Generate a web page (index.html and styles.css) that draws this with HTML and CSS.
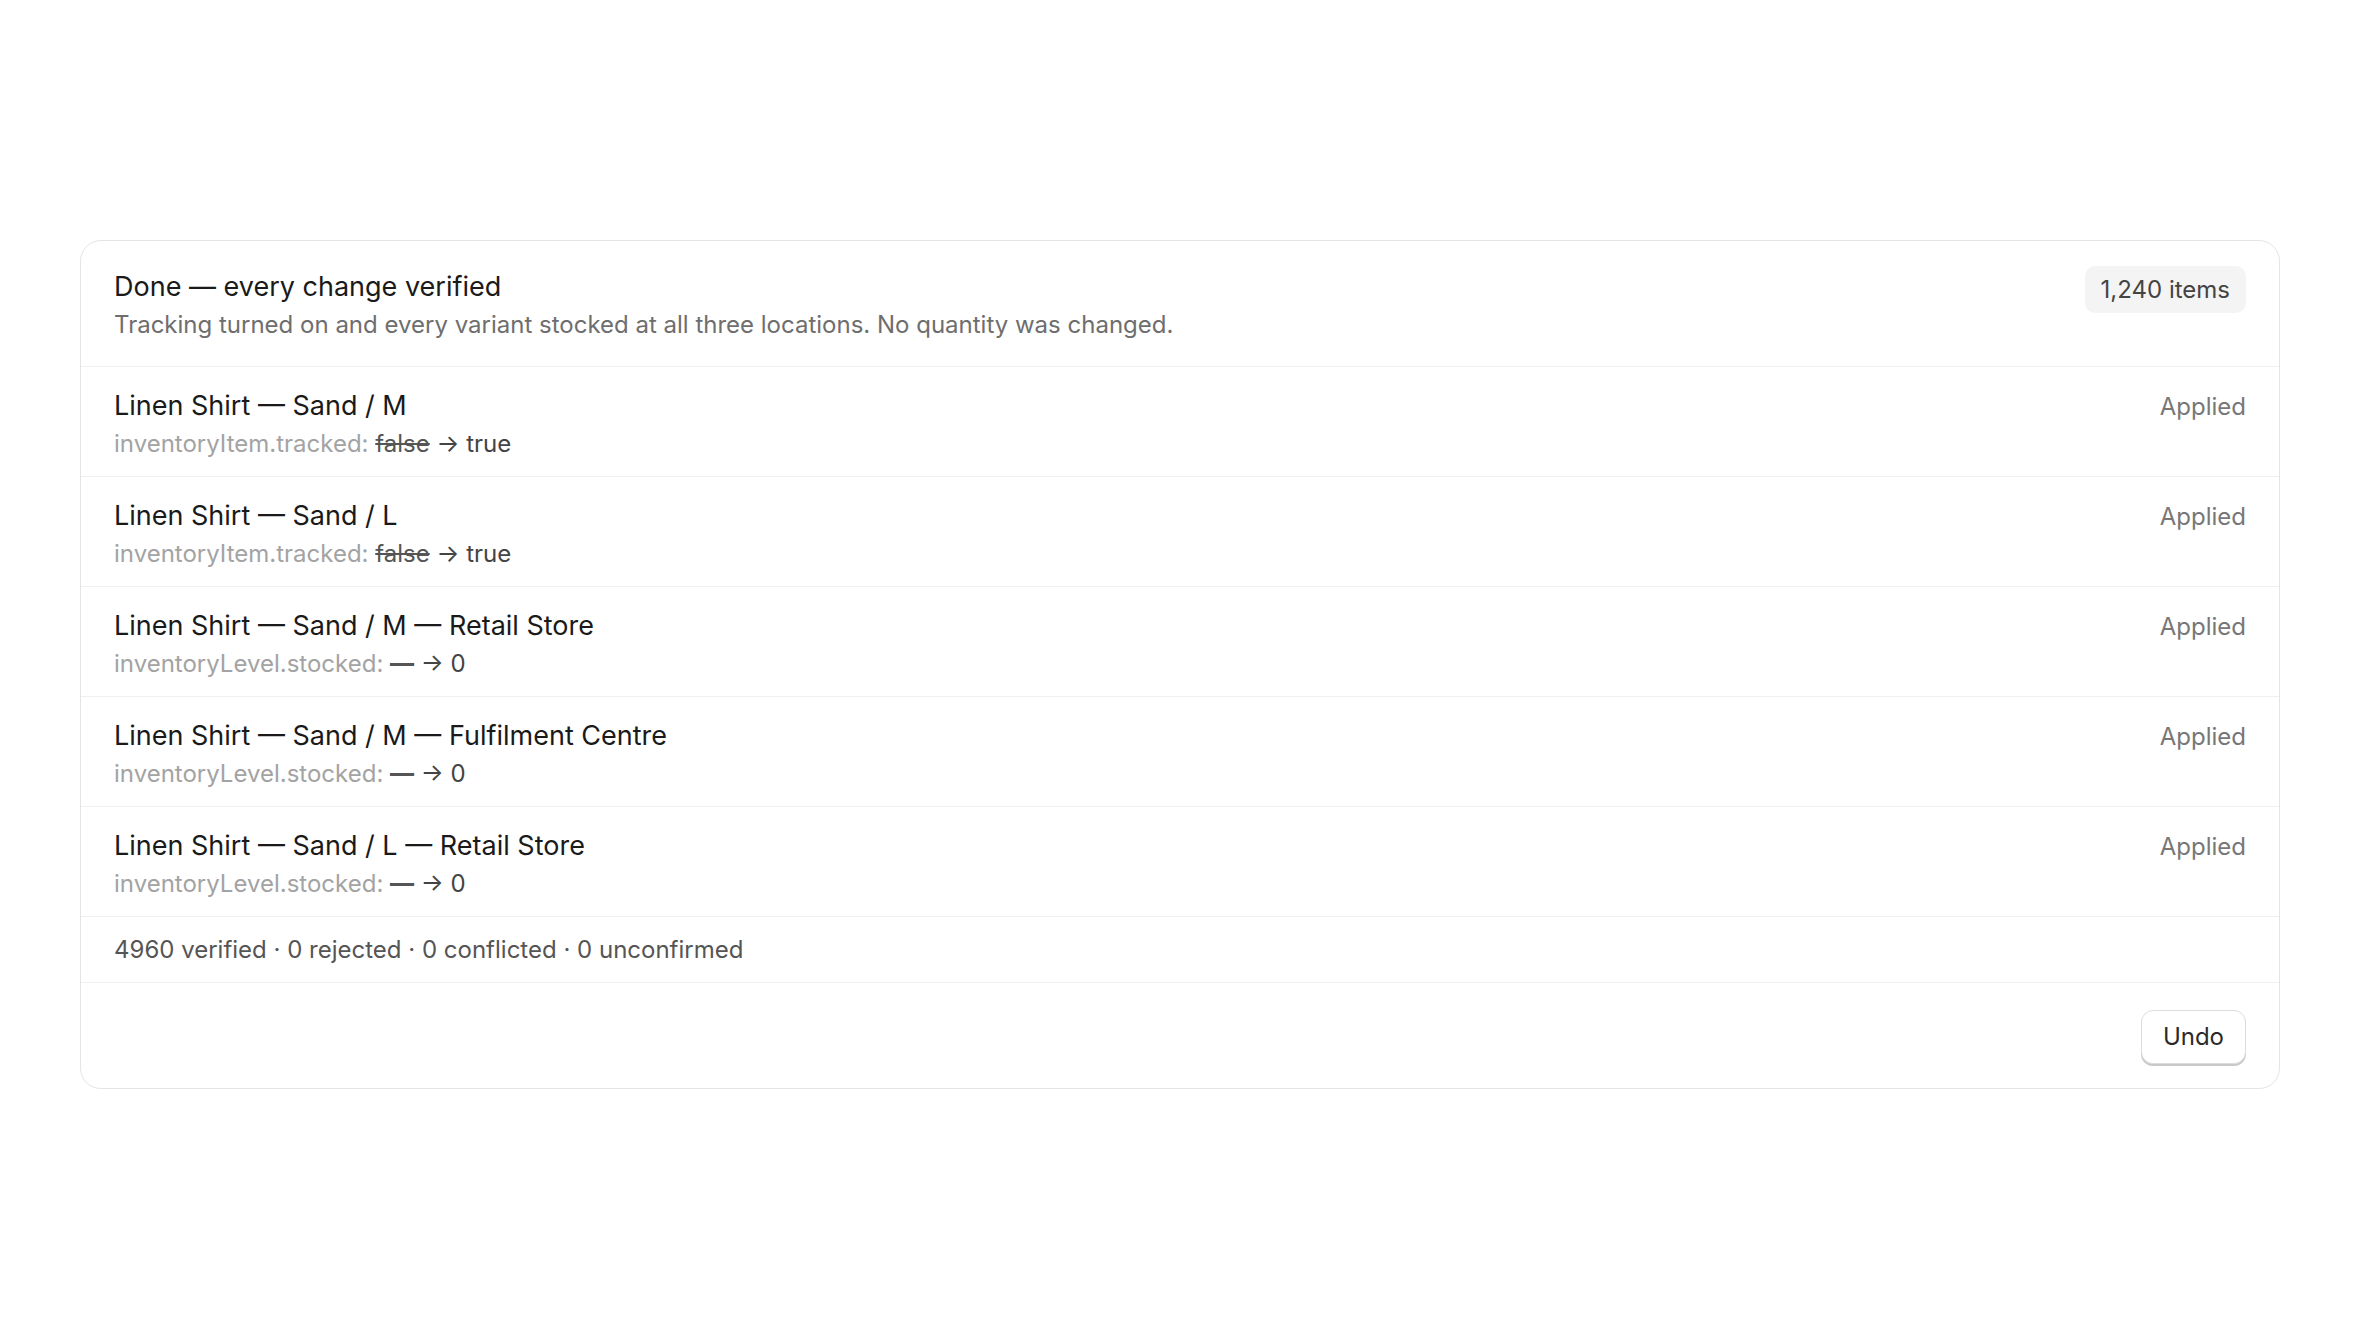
FILE: index.html
```html
<!DOCTYPE html>
<html>
<head>
    <title>Inventory changes</title>
    <link rel="stylesheet" href="styles.css">
</head>
<body>

<div id="page">
    <div class="card">

        <div class="card__header">
            <div class="header__text">
                <div class="header__title">Done — every change verified</div>
                <div class="header__sub">Tracking turned on and every variant stocked at all three locations. No quantity was changed.</div>
            </div>
            <span class="count__badge">1,240 items</span>
        </div>

        <ul class="change__list">
            <li class="change__row">
                <div class="change__info">
                    <div class="change__name">Linen Shirt — Sand / M</div>
                    <div class="change__diff"><span class="diff__field">inventoryItem.tracked:</span> <s class="diff__old">false</s> → <span class="diff__new">true</span></div>
                </div>
                <span class="change__status">Applied</span>
            </li>
            <li class="change__row">
                <div class="change__info">
                    <div class="change__name">Linen Shirt — Sand / L</div>
                    <div class="change__diff"><span class="diff__field">inventoryItem.tracked:</span> <s class="diff__old">false</s> → <span class="diff__new">true</span></div>
                </div>
                <span class="change__status">Applied</span>
            </li>
            <li class="change__row">
                <div class="change__info">
                    <div class="change__name">Linen Shirt — Sand / M — Retail Store</div>
                    <div class="change__diff"><span class="diff__field">inventoryLevel.stocked:</span> <s class="diff__old diff__empty">—</s> → <span class="diff__new">0</span></div>
                </div>
                <span class="change__status">Applied</span>
            </li>
            <li class="change__row">
                <div class="change__info">
                    <div class="change__name">Linen Shirt — Sand / M — Fulfilment Centre</div>
                    <div class="change__diff"><span class="diff__field">inventoryLevel.stocked:</span> <s class="diff__old diff__empty">—</s> → <span class="diff__new">0</span></div>
                </div>
                <span class="change__status">Applied</span>
            </li>
            <li class="change__row">
                <div class="change__info">
                    <div class="change__name">Linen Shirt — Sand / L — Retail Store</div>
                    <div class="change__diff"><span class="diff__field">inventoryLevel.stocked:</span> <s class="diff__old diff__empty">—</s> → <span class="diff__new">0</span></div>
                </div>
                <span class="change__status">Applied</span>
            </li>
        </ul>

        <div class="card__summary">4960 verified · 0 rejected · 0 conflicted · 0 unconfirmed</div>

        <div class="card__actions">
            <button class="undo__button">Undo</button>
        </div>

    </div>
</div>

</body>
</html>
```

FILE: styles.css
```css
body {
    margin: 0;
    background: #fff;
    color: #1a1a1a;
    font-family: Inter, "Noto Sans", sans-serif;
}

#page {
    min-height: 100vh;
    display: flex;
    align-items: center;
    padding: 0 80px;
    box-sizing: border-box;
}

.card {
    flex-grow: 1;
    border: 1px solid #e4e4e4;
    border-radius: 21px;
    background: #fff;
    overflow: hidden;
}

/*---------Header-------------*/
.card__header {
    display: flex;
    justify-content: space-between;
    align-items: flex-start;
    padding: 28px 33px 26px;
    border-bottom: 1px solid #f0f0f0;
}

.header__title {
    font-size: 27px;
    line-height: 36px;
    color: #1a1a1a;
}

.header__sub {
    margin-top: 5px;
    font-size: 24px;
    line-height: 30px;
    color: #6e6e6e;
}

.count__badge {
    margin-top: -3px;
    height: 47px;
    line-height: 47px;
    padding: 0 16px;
    border-radius: 10px;
    background: #f4f4f4;
    font-size: 24px;
    color: #444;
}

/*---------Rows-------------*/
.change__list {
    list-style-type: none;
    margin: 0;
    padding: 0;
}

.change__row {
    display: flex;
    justify-content: space-between;
    align-items: flex-start;
    padding: 21px 33px 17px;
    border-bottom: 1px solid #f0f0f0;
}

.change__name {
    font-size: 27px;
    line-height: 36px;
    color: #1a1a1a;
}

.change__diff {
    margin-top: 5px;
    font-size: 24px;
    line-height: 30px;
    color: #444;
}

.diff__field { color: #a3a3a3; }
.diff__old {
    color: #555;
    text-decoration-thickness: 2px;
}
.diff__empty {
    font-weight: 700;
}
.diff__new { color: #444; }

.change__status {
    margin-top: 4px;
    font-size: 24px;
    line-height: 30px;
    color: #777;
}

/*---------Footer-------------*/
.card__summary {
    padding: 18px 33px 17px;
    font-size: 24px;
    line-height: 30px;
    color: #555;
    border-bottom: 1px solid #f0f0f0;
}

.card__actions {
    display: flex;
    justify-content: flex-end;
    padding: 27px 33px 24px;
}

.undo__button {
    height: 54px;
    padding: 0 21px;
    border: 1px solid #dcdcdc;
    border-radius: 12px;
    background: #fff;
    box-shadow: 0 2px 0 #c8c8c8;
    font-family: inherit;
    font-size: 24px;
    color: #2a2a2a;
}
```
